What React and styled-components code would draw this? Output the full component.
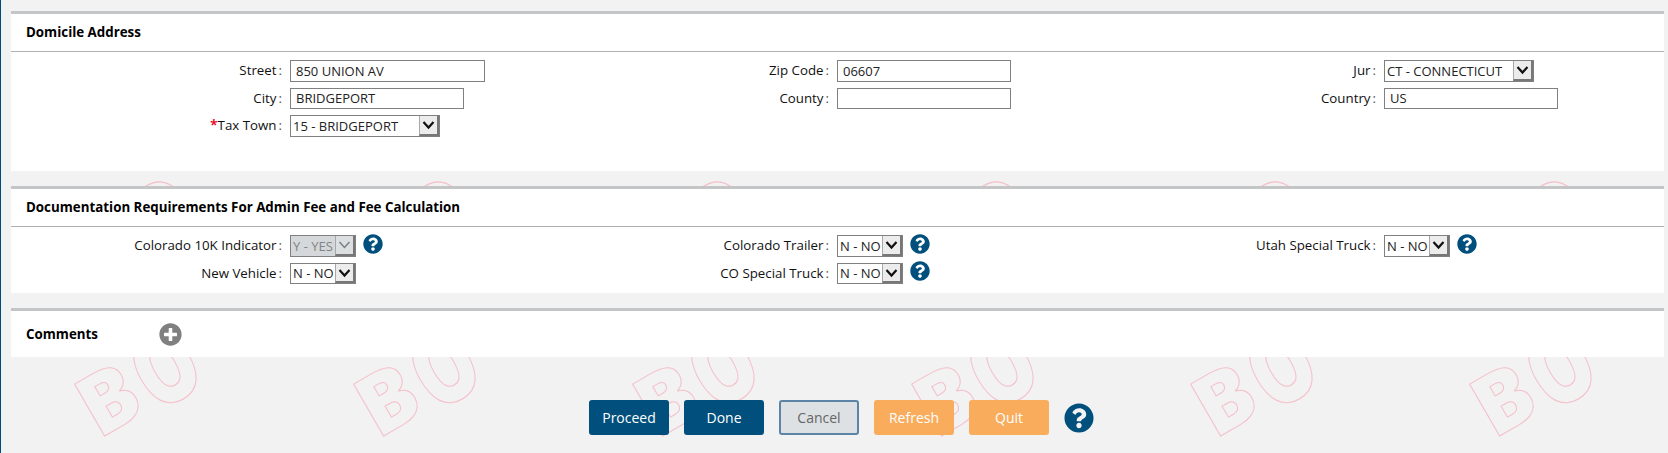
import React from "react";
import styled, { createGlobalStyle } from "styled-components";
import { FaQuestionCircle, FaPlusCircle } from "react-icons/fa";

const GlobalStyle = createGlobalStyle`
  html, body {
    margin: 0;
    padding: 0;
    height: 100%;
  }
  body {
    background: #f2f2f2;
    font-family: "Open Sans", "Liberation Sans", sans-serif;
    font-size: 13px;
    color: #111;
    overflow: hidden;
  }
`;

const Page = styled.div`
  position: relative;
  height: 453px;
  overflow: hidden;
  border-left: 1px solid #004b7c;
  padding: 11px 4px 0 10px;
  box-sizing: border-box;
`;

const Watermark = styled.div`
  position: absolute;
  top: 156px;
  left: -3px;
  display: grid;
  grid-template-columns: repeat(6, 279px);
  grid-auto-rows: 149px;
`;

const Mark = styled.span`
  display: flex;
  align-items: center;
  justify-content: center;
  font-size: 84px;
  font-weight: 800;
  line-height: 1;
  color: transparent;
  -webkit-text-stroke: 1px #f5c0cb;
  transform: rotate(-30deg);
  user-select: none;
`;

const TallLetter = styled.span`
  display: inline-block;
  margin-left: 3px;
  transform: scale(0.92, 1.2);
`;

const Content = styled.div`
  position: relative;
  z-index: 1;
`;

const Section = styled.section`
  background: #fff;
  border-top: 3px solid #c3c5c7;
  margin-bottom: 15px;
`;

const Title = styled.h2`
  margin: 0;
  box-sizing: border-box;
  height: 38px;
  padding: 0 0 2px 15px;
  display: flex;
  align-items: center;
  font-size: 13.33px;
  font-weight: 700;
  color: #000;
  border-bottom: 1px solid #b0b0b0;
`;

const Fields = styled.div`
  display: grid;
  grid-template-columns: repeat(3, 547px);
  row-gap: 6px;
  padding-top: 8px;
  padding-bottom: ${(props) => props.$bottom}px;
`;

const Field = styled.div`
  display: grid;
  grid-template-columns: 271px 1fr;
  column-gap: 8px;
  align-items: center;
`;

const Label = styled.label`
  text-align: right;
  font-size: 13.3px;
  line-height: 18px;
  padding-bottom: 2px;
  white-space: nowrap;
  color: #111;

  b {
    color: #e8112d;
    font-weight: 700;
  }

  i {
    font-style: normal;
    margin-left: 2px;
    color: #555;
  }
`;

const Control = styled.div`
  display: flex;
  align-items: center;
  gap: 7px;
`;

const Input = styled.input`
  box-sizing: border-box;
  width: ${(props) => props.$width}px;
  height: ${(props) => (props.$short ? 21 : 22)}px;
  padding: 0 5px 1px;
  border: 1px solid #808080;
  background: #fff;
  font-family: inherit;
  font-size: 13px;
  color: #222;
  outline: none;
`;

const SelectBox = styled.div`
  box-sizing: border-box;
  display: flex;
  width: ${(props) => props.$width}px;
  height: ${(props) => (props.$short ? 21 : 22)}px;
  border: 1px solid #808080;
  background: ${(props) => (props.$disabled ? "#d5d8da" : "#fff")};
`;

const Select = styled.select`
  appearance: none;
  flex: 1;
  min-width: 0;
  border: 0;
  padding: 0 0 1px 2px;
  background: transparent;
  font-family: inherit;
  font-size: 13px;
  color: ${(props) => (props.disabled ? "#7f8487" : "#222")};
  opacity: 1;
  outline: none;
`;

const Arrow = styled.span`
  box-sizing: border-box;
  flex: 0 0 20px;
  display: flex;
  align-items: center;
  justify-content: center;
  background: ${(props) => (props.$disabled ? "#dcdfe0" : "#ececec")};
  border-left: 1px solid #a8a8a8;
  border-right: 2px solid #777;
  border-bottom: 2px solid #777;
`;

const CommentsRow = styled.div`
  height: 46px;
  display: flex;
  align-items: center;
  padding-left: 15px;
`;

const CommentsTitle = styled.h2`
  margin: 0;
  width: 133px;
  font-size: 13.33px;
  font-weight: 700;
  color: #000;
`;

const Buttons = styled.div`
  display: flex;
  align-items: center;
  gap: 15px;
  padding: 28px 0 0 578px;
`;

const Button = styled.button`
  box-sizing: border-box;
  width: 80px;
  height: 35px;
  border-radius: 3px;
  border: ${(props) => (props.$kind === "muted" ? "2px solid #5b84a6" : "0")};
  background: ${(props) =>
    props.$kind === "muted" ? "#dde1e4" : props.$kind === "warm" ? "#f9ac5c" : "#004f7c"};
  color: ${(props) => (props.$kind === "muted" ? "#666" : "#fff")};
  font-family: inherit;
  font-size: 14px;
`;

const HelpIcon = styled(FaQuestionCircle)`
  color: #004f7c;
  margin-top: ${(props) => (props.size > 20 ? 0 : -5)}px;
`;

function Chevron({ disabled }) {
  return (
    <svg width="13" height="10" viewBox="0 0 13 10" aria-hidden="true">
      <path
        d="M1.5 2 L6.5 7.5 L11.5 2"
        fill="none"
        stroke={disabled ? "#7a7f82" : "#111"}
        strokeWidth={disabled ? 1.5 : 2.2}
      />
    </svg>
  );
}

function Dropdown({ value, width, short, disabled }) {
  return (
    <SelectBox $width={width} $short={short} $disabled={disabled}>
      <Select disabled={disabled} defaultValue={value}>
        <option>{value}</option>
      </Select>
      <Arrow $disabled={disabled}>
        <Chevron disabled={disabled} />
      </Arrow>
    </SelectBox>
  );
}

function Row({ label, required, children }) {
  return (
    <Field>
      <Label>
        {required && <b>*</b>}
        {label}
        <i>:</i>
      </Label>
      <Control>{children}</Control>
    </Field>
  );
}

const Help = ({ size = 20 }) => <HelpIcon size={size} />;

export default function App() {
  return (
    <>
      <GlobalStyle />
      <Page>
        <Watermark aria-hidden="true">
          {Array.from({ length: 12 }, (_, index) => (
            <Mark key={index}>
              B<TallLetter>O</TallLetter>
            </Mark>
          ))}
        </Watermark>
        <Content>
          <Section>
            <Title>Domicile Address</Title>
            <Fields $bottom={34}>
              <Row label="Street">
                <Input defaultValue="850 UNION AV" $width={195} />
              </Row>
              <Row label="Zip Code">
                <Input defaultValue="06607" $width={174} />
              </Row>
              <Row label="Jur">
                <Dropdown value="CT - CONNECTICUT" width={150} />
              </Row>
              <Row label="City">
                <Input defaultValue="BRIDGEPORT" $width={174} $short />
              </Row>
              <Row label="County">
                <Input defaultValue="" $width={174} $short />
              </Row>
              <Row label="Country">
                <Input defaultValue="US" $width={174} $short />
              </Row>
              <Row label="Tax Town" required>
                <Dropdown value="15 - BRIDGEPORT" width={150} />
              </Row>
            </Fields>
          </Section>

          <Section>
            <Title>Documentation Requirements For Admin Fee and Fee Calculation</Title>
            <Fields $bottom={9}>
              <Row label="Colorado 10K Indicator">
                <Dropdown value="Y - YES" width={66} disabled />
                <Help />
              </Row>
              <Row label="Colorado Trailer">
                <Dropdown value="N - NO" width={66} />
                <Help />
              </Row>
              <Row label="Utah Special Truck">
                <Dropdown value="N - NO" width={66} />
                <Help />
              </Row>
              <Row label="New Vehicle">
                <Dropdown value="N - NO" width={66} short />
              </Row>
              <Row label="CO Special Truck">
                <Dropdown value="N - NO" width={66} short />
                <Help />
              </Row>
            </Fields>
          </Section>

          <Section>
            <CommentsRow>
              <CommentsTitle>Comments</CommentsTitle>
              <FaPlusCircle size={23} color="#808080" />
            </CommentsRow>
          </Section>

          <Buttons>
            <Button>Proceed</Button>
            <Button>Done</Button>
            <Button $kind="muted">Cancel</Button>
            <Button $kind="warm">Refresh</Button>
            <Button $kind="warm">Quit</Button>
            <Help size={30} />
          </Buttons>
        </Content>
      </Page>
    </>
  );
}
